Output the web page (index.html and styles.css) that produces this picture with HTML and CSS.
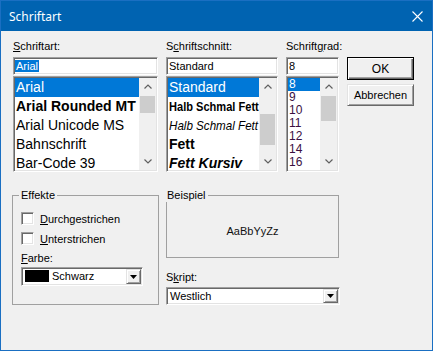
FILE: index.html
```html
<!DOCTYPE html>
<html lang="de">
<head>
    <meta charset="UTF-8">
    <title>Schriftart</title>
    <link rel="stylesheet" href="styles.css">
</head>
<body>

<div class="window">
    <!-- Titelleiste -->
    <div class="titlebar">
        <span class="title">Schriftart</span>
        <svg class="close" width="11" height="11" viewBox="0 0 11 11">
            <path d="M0.5 0.5 L10.5 10.5 M10.5 0.5 L0.5 10.5" stroke="#fff" stroke-width="1.1" fill="none"/>
        </svg>
    </div>

    <div class="content">
        <div class="top">
            <!-- Schriftart -->
            <div class="col col-font">
                <div class="lbl"><u>S</u>chriftart:</div>
                <div class="field sunken"><span class="field-sel">Arial</span></div>
                <div class="list sunken">
                    <ul class="items items-font">
                        <li class="on">Arial</li>
                        <li class="b">Arial Rounded MT</li>
                        <li>Arial Unicode MS</li>
                        <li>Bahnschrift</li>
                        <li>Bar-Code 39</li>
                    </ul>
                    <div class="sbar">
                        <div class="sbtn"><svg width="8" height="5" viewBox="0 0 8 5"><polyline points="0.5,4.5 4,1 7.5,4.5" stroke="#606060" stroke-width="1.2" fill="none"/></svg></div>
                        <div class="track"><div class="thumb thumb-font"></div></div>
                        <div class="sbtn"><svg width="8" height="5" viewBox="0 0 8 5"><polyline points="0.5,0.5 4,4 7.5,0.5" stroke="#606060" stroke-width="1.2" fill="none"/></svg></div>
                    </div>
                </div>
            </div>

            <!-- Schriftschnitt -->
            <div class="col col-style">
                <div class="lbl">S<u>c</u>hriftschnitt:</div>
                <div class="field sunken">Standard</div>
                <div class="list sunken">
                    <ul class="items items-font">
                        <li class="on">Standard</li>
                        <li><span class="narrow b">Halb Schmal Fett</span></li>
                        <li><span class="narrow narrow-i i">Halb Schmal Fett</span></li>
                        <li class="b">Fett</li>
                        <li class="b i">Fett Kursiv</li>
                    </ul>
                    <div class="sbar">
                        <div class="sbtn"><svg width="8" height="5" viewBox="0 0 8 5"><polyline points="0.5,4.5 4,1 7.5,4.5" stroke="#606060" stroke-width="1.2" fill="none"/></svg></div>
                        <div class="track"><div class="thumb thumb-style"></div></div>
                        <div class="sbtn"><svg width="8" height="5" viewBox="0 0 8 5"><polyline points="0.5,0.5 4,4 7.5,0.5" stroke="#606060" stroke-width="1.2" fill="none"/></svg></div>
                    </div>
                </div>
            </div>

            <!-- Schriftgrad -->
            <div class="col col-size">
                <div class="lbl">Schrift<u>g</u>rad:</div>
                <div class="field sunken">8</div>
                <div class="list sunken">
                    <ul class="items items-size">
                        <li class="on">8</li>
                        <li>9</li>
                        <li>10</li>
                        <li>11</li>
                        <li>12</li>
                        <li>14</li>
                        <li>16</li>
                    </ul>
                    <div class="sbar">
                        <div class="sbtn"><svg width="8" height="5" viewBox="0 0 8 5"><polyline points="0.5,4.5 4,1 7.5,4.5" stroke="#606060" stroke-width="1.2" fill="none"/></svg></div>
                        <div class="track"><div class="thumb thumb-size"></div></div>
                        <div class="sbtn"><svg width="8" height="5" viewBox="0 0 8 5"><polyline points="0.5,0.5 4,4 7.5,0.5" stroke="#606060" stroke-width="1.2" fill="none"/></svg></div>
                    </div>
                </div>
            </div>

            <!-- Buttons -->
            <div class="col col-btns">
                <button class="btn btn-default">OK</button>
                <button class="btn">Abbrechen</button>
            </div>
        </div>

        <div class="bottom">
            <fieldset class="group group-fx">
                <legend>Effekte</legend>
                <div class="check check-first"><span class="box sunken"></span><span><u>D</u>urchgestrichen</span></div>
                <div class="check"><span class="box sunken"></span><span><u>U</u>nterstrichen</span></div>
                <div class="lbl lbl-color"><u>F</u>arbe:</div>
                <div class="combo combo-color sunken">
                    <span class="swatch"></span>
                    <span class="combo-text">Schwarz</span>
                    <span class="drop"><svg width="7" height="4" viewBox="0 0 7 4"><polygon points="0,0 7,0 3.5,4" fill="#000"/></svg></span>
                </div>
            </fieldset>

            <div class="col-right">
                <fieldset class="group group-sample">
                    <legend>Beispiel</legend>
                    <div class="sample">AaBbYyZz</div>
                </fieldset>
                <div class="lbl lbl-script">S<u>k</u>ript:</div>
                <div class="combo combo-script sunken">
                    <span class="combo-text">Westlich</span>
                    <span class="drop"><svg width="7" height="4" viewBox="0 0 7 4"><polygon points="0,0 7,0 3.5,4" fill="#000"/></svg></span>
                </div>
            </div>
        </div>
    </div>
</div>

</body>
</html>
```

FILE: styles.css
```css
/* Grundlayout */
* {
    box-sizing: border-box;
}

body {
    margin: 0;
    background: #f0f0f0;
    font-family: "Liberation Sans", Arial, sans-serif;
    font-size: 11px;
    color: #000;
}

u {
    text-decoration-thickness: 1px;
    text-underline-offset: 1px;
}

/* Fenster */
.window {
    width: 433px;
    height: 351px;
    border: 1px solid #1a6fc2;
    background: #f0f0f0;
    display: flex;
    flex-direction: column;
}

.titlebar {
    height: 30px;
    flex: none;
    background: #0063b1;
    color: #fff;
    display: flex;
    align-items: center;
    justify-content: space-between;
    padding: 0 9px 0 8px;
    font-family: "Noto Sans", "Open Sans", sans-serif;
    font-size: 12px;
}

.close {
    display: block;
}

.content {
    flex: 1;
    padding: 9px 0 0 12px;
}

/* 3D-Rahmen */
.sunken {
    border: 1px solid;
    border-color: #a0a0a0 #fff #fff #a0a0a0;
    box-shadow: inset 1px 1px 0 #696969, inset -1px -1px 0 #e3e3e3;
    padding: 1px;
    background: #fff;
}

/* Obere Reihe */
.top {
    display: flex;
    gap: 8px;
}

.col-font {
    width: 145px;
}

.col-style {
    width: 112px;
}

.col-size {
    width: 53px;
}

.col-btns {
    width: 67px;
    padding-top: 17px;
    display: flex;
    flex-direction: column;
    gap: 4px;
}

.lbl {
    height: 13px;
    line-height: 13px;
    margin-bottom: 4px;
    white-space: nowrap;
}

.field {
    height: 18px;
    line-height: 14px;
    padding: 1px 2px;
    white-space: nowrap;
}

.field-sel {
    background: #0078d7;
    color: #fff;
    padding: 0 1px;
    margin-left: -1px;
}

.list {
    margin-top: 1px;
    height: 96px;
    display: flex;
}

.items {
    flex: 1;
    min-width: 0;
    list-style: none;
    margin: 0;
    padding: 0;
    overflow: hidden;
}

.items li {
    white-space: nowrap;
    padding-left: 1px;
}

.items-font li {
    height: 19px;
    line-height: 19px;
    font-size: 14px;
}

.items-size li {
    height: 13px;
    line-height: 13px;
    font-size: 12px;
    color: #3a0f3f;
}

.items li.on {
    background: #0078d7;
    color: #fff;
}

.b {
    font-weight: bold;
}

.i {
    font-style: italic;
}

/* schmale Schnitte: Arial Narrow gibt es nicht, daher gestaucht */
.narrow {
    display: inline-block;
    font-size: 13.5px;
    transform: scaleX(0.82);
    transform-origin: left center;
}

.narrow-i {
    transform: scaleX(0.86);
}

/* Bildlaufleiste */
.sbar {
    width: 17px;
    flex: none;
    display: flex;
    flex-direction: column;
    background: #f0f0f0;
}

.sbtn {
    height: 17px;
    display: flex;
    align-items: center;
    justify-content: center;
}

.track {
    flex: 1;
}

.thumb {
    margin: 1px 1px 0 1px;
    background: #cdcdcd;
}

.thumb-font {
    height: 17px;
}

.thumb-style {
    margin-top: 19px;
    height: 31px;
}

.thumb-size {
    height: 25px;
}

/* Schaltflaechen */
.btn {
    width: 67px;
    height: 22px;
    padding: 0;
    font-family: "Liberation Sans", Arial, sans-serif;
    font-size: 11px;
    color: #000;
    background: #f0f0f0;
    border: 1px solid;
    border-color: #e3e3e3 #696969 #696969 #e3e3e3;
    box-shadow: inset 1px 1px 0 #fff, inset -1px -1px 0 #a0a0a0;
}

.btn-default {
    height: 23px;
    font-size: 12px;
    border-color: #000;
    box-shadow: inset 1px 1px 0 #fff, inset -1px -1px 0 #696969, inset -2px -2px 0 #a0a0a0;
}

/* Untere Reihe */
.bottom {
    display: flex;
    gap: 7px;
    margin-top: 17px;
    margin-left: -1px;
}

.group {
    margin: 0;
    padding: 0 0 0 8px;
    border: 1px solid #a0a0a0;
    min-width: 0;
}

.group legend {
    padding: 0 2px;
    margin-left: -2px;
    line-height: 13px;
    background: #f0f0f0;
}

.group-fx {
    width: 147px;
    height: 116px;
}

.col-right {
    width: 173px;
}

.group-sample {
    height: 69px;
    padding: 0;
}

.sample {
    height: 54px;
    padding-top: 4px;
    display: flex;
    align-items: center;
    justify-content: center;
    color: #101010;
}

.check {
    display: flex;
    align-items: center;
    gap: 6px;
    height: 13px;
    margin-bottom: 7px;
}

.check-first {
    margin-top: 10px;
}

.box {
    width: 13px;
    height: 13px;
}

.lbl-color {
    margin-top: 1px;
    margin-bottom: 2px;
}

.combo {
    display: flex;
    align-items: stretch;
    white-space: nowrap;
}

.combo-color {
    width: 122px;
    height: 19px;
}

.swatch {
    width: 24px;
    height: 12px;
    margin: 1px 3px 0 2px;
    background: #000;
}

.combo-text {
    line-height: 14px;
}

.combo-color .combo-text {
    line-height: 15px;
}

.drop {
    width: 15px;
    margin-left: auto;
    display: flex;
    align-items: center;
    justify-content: center;
    background: #f0f0f0;
    border: 1px solid;
    border-color: #e3e3e3 #696969 #696969 #e3e3e3;
    box-shadow: inset 1px 1px 0 #fff, inset -1px -1px 0 #a0a0a0;
}

.lbl-script {
    margin-top: 13px;
    margin-bottom: 3px;
}

.combo-script {
    width: 174px;
    height: 18px;
}

.combo-script .combo-text {
    padding-left: 2px;
}
```
